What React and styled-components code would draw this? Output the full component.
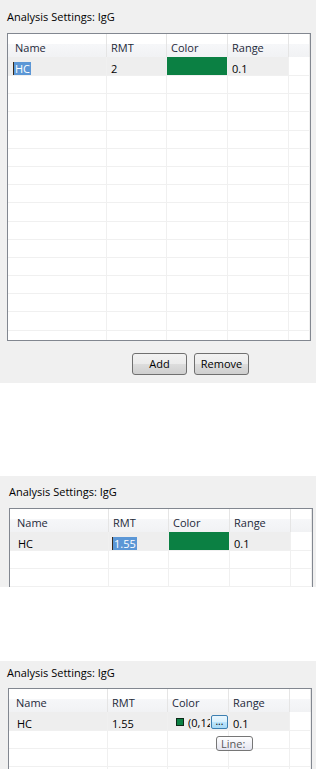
import styled, { createGlobalStyle } from "styled-components";

// Analysis settings panels: three states of the same list editor

const GlobalStyle = createGlobalStyle`
  html, body {
    margin: 0;
    padding: 0;
    background: #ffffff;
  }
  body {
    font-family: "Open Sans", "Noto Sans", sans-serif;
    font-size: 11px;
    color: #000;
  }
`;

const Page = styled.div`
  display: flex;
  flex-direction: column;
  width: 319px;
  height: 769px;
  overflow: hidden;
`;

const Panel = styled.section`
  width: 316px;
  height: ${(p) => p.$height}px;
  margin-top: ${(p) => p.$gap || 0}px;
  flex-shrink: 0;
  background: #f0f0f0;
  display: flex;
  flex-direction: column;
  overflow: hidden;
`;

const Title = styled.div`
  height: ${(p) => p.$height}px;
  box-sizing: border-box;
  padding-top: ${(p) => p.$top}px;
  padding-left: ${(p) => p.$left}px;
  line-height: 15px;
  color: #000;
  flex-shrink: 0;
`;

const Table = styled.div`
  margin-left: ${(p) => p.$left}px;
  width: 304px;
  height: ${(p) => p.$height}px;
  box-sizing: border-box;
  border: 1px solid #828790;
  background: #ffffff;
  flex-shrink: 0;
  overflow: hidden;
`;

const Row = styled.div`
  display: grid;
  grid-template-columns: 99px 60px 61px 61px 1fr;
  height: ${(p) => p.$h}px;
  box-sizing: border-box;
`;

const HeadCell = styled.div`
  box-sizing: border-box;
  padding: 6px 0 0 ${(p) => (p.$first ? 7 : 4)}px;
  line-height: 15px;
  color: #1e2a3a;
  border-right: 1px solid #e5e5e5;
  background: linear-gradient(to bottom, #ffffff 0%, #ffffff 45%, #f6f7f9 45%, #f1f2f4 100%);
  white-space: nowrap;
  overflow: hidden;
`;

const Cell = styled.div`
  position: relative;
  box-sizing: border-box;
  padding: ${(p) => (p.$tight ? 0 : 4)}px 0 0 ${(p) => (p.$first ? 8 : 4)}px;
  line-height: 15px;
  white-space: nowrap;
  border-right: 1px solid #f0f0f0;
  border-bottom: 1px solid #f0f0f0;
  background: ${(p) => (p.$fill ? p.$fill : p.$active ? "#eeeeee" : "#ffffff")};
  overflow: ${(p) => (p.$open ? "visible" : "hidden")};
`;

const Selected = styled.span`
  display: inline-block;
  margin-left: ${(p) => p.$shift || 0}px;
  padding: 0 1px 0 1px;
  line-height: 14px;
  background: #5b97d6;
  color: #ffffff;
  border-left: 1px solid #3a2a1a;
`;

const ColorEditor = styled.div`
  display: flex;
  align-items: center;
  height: 18px;
  padding-left: 4px;
`;

const Swatch = styled.span`
  width: 6px;
  height: 6px;
  border: 1px solid #0d2a18;
  background: #0b8043;
  flex-shrink: 0;
  margin-top: 1px;
`;

const ColorText = styled.span`
  width: 23px;
  margin-left: 4px;
  overflow: hidden;
  line-height: 15px;
  padding-top: 2px;
`;

const DotsButton = styled.button`
  width: 18px;
  height: 14px;
  margin-left: 1px;
  margin-top: 1px;
  padding: 0;
  border: 1px solid #3c7fb1;
  border-radius: 2px;
  background: linear-gradient(to bottom, #eaf6fd 0%, #d9f0fc 50%, #bee6fd 50%, #a7d9f5 100%);
  font-family: inherit;
  font-size: 10px;
  line-height: 14px;
  color: #000;
  display: flex;
  justify-content: center;
  align-items: flex-end;
`;

const Tooltip = styled.div`
  position: absolute;
  left: 48px;
  top: 24px;
  width: 37px;
  height: 15px;
  box-sizing: border-box;
  border: 1px solid #767676;
  border-radius: 3px;
  background: linear-gradient(to bottom, #ffffff, #e4e5f0);
  color: #575757;
  line-height: 13px;
  padding-left: 4px;
  z-index: 2;
`;

const ButtonBar = styled.div`
  display: flex;
  gap: 7px;
  padding-left: 132px;
  margin-top: 12px;
`;

const Button = styled.button`
  width: 55px;
  height: 22px;
  box-sizing: border-box;
  border: 1px solid #707070;
  border-radius: 3px;
  background: linear-gradient(to bottom, #f2f2f2 0%, #ebebeb 50%, #dddddd 50%, #cfcfcf 100%);
  font-family: inherit;
  font-size: 11px;
  color: #000;
  padding: 0;
  line-height: 18px;
`;

const HEAD = ["Name", "RMT", "Color", "Range", ""];

const Header = () => (
  <Row $h={23}>
    {HEAD.map((h, i) => (
      <HeadCell key={i} $first={i === 0}>
        {h}
      </HeadCell>
    ))}
  </Row>
);

const EmptyRows = ({ count }) =>
  Array.from({ length: count }).map((_, r) => (
    <Row key={r} $h={18.2}>
      {HEAD.map((_, i) => (
        <Cell key={i} />
      ))}
    </Row>
  ));

const App = () => {
  return (
    <Page>
      <GlobalStyle />

      <Panel $height={383}>
        <Title $height={33} $top={9} $left={7}>
          Analysis Settings: IgG
        </Title>
        <Table $left={7} $height={308}>
          <Header />
          <Row $h={19}>
            <Cell $first $active>
              <Selected $shift={-3}>HC</Selected>
            </Cell>
            <Cell $active>2</Cell>
            <Cell $fill="#0b8043" />
            <Cell $active>0.1</Cell>
            <Cell />
          </Row>
          <EmptyRows count={15} />
        </Table>
        <ButtonBar>
          <Button>Add</Button>
          <Button>Remove</Button>
        </ButtonBar>
      </Panel>

      <Panel $height={111} $gap={93}>
        <Title $height={32} $top={8} $left={9}>
          Analysis Settings: IgG
        </Title>
        <Table $left={9} $height={120}>
          <Header />
          <Row $h={19}>
            <Cell $first $active>HC</Cell>
            <Cell $active>
              <Selected $shift={-1}>1.55</Selected>
            </Cell>
            <Cell $fill="#0b8043" />
            <Cell $active>0.1</Cell>
            <Cell />
          </Row>
          <EmptyRows count={3} />
        </Table>
      </Panel>

      <Panel $height={120} $gap={74}>
        <Title $height={27} $top={4} $left={7}>
          Analysis Settings: IgG
        </Title>
        <Table $left={8} $height={120}>
          <Header />
          <Row $h={19}>
            <Cell $first $active>HC</Cell>
            <Cell $active>1.55</Cell>
            <Cell $active $tight $open>
              <ColorEditor>
                <Swatch />
                <ColorText>(0,128,67)</ColorText>
                <DotsButton>...</DotsButton>
              </ColorEditor>
              <Tooltip>Line:</Tooltip>
            </Cell>
            <Cell $active>0.1</Cell>
            <Cell />
          </Row>
          <EmptyRows count={3} />
        </Table>
      </Panel>
    </Page>
  );
};

export default App;
